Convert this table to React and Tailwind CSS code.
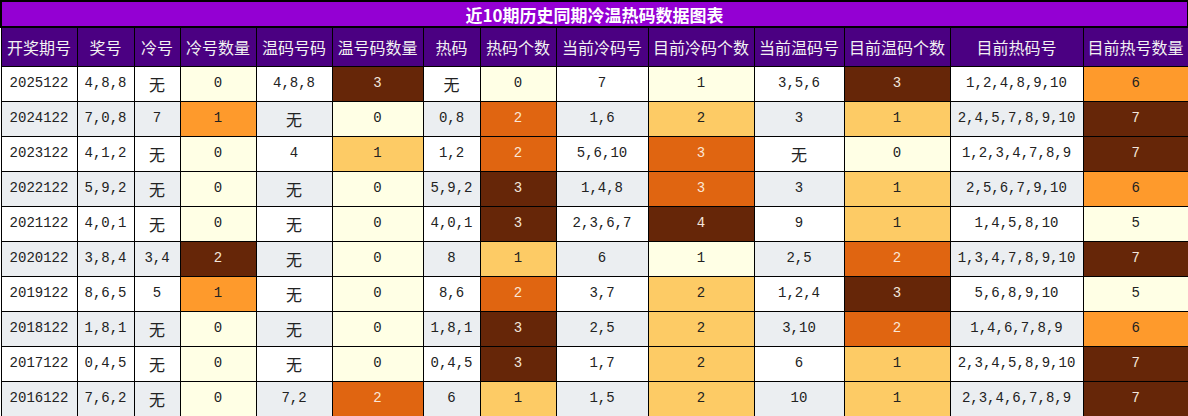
const headers = [
  '开奖期号', '奖号', '冷号', '冷号数量', '温码号码', '温号码数量', '热码', '热码个数',
  '当前冷码号', '目前冷码个数', '当前温码号', '目前温码个数', '目前热码号', '目前热号数量',
];

const widths = [76, 57, 46, 76, 76, 91, 57, 76, 92, 106, 90, 106, 133, 105];

// cell colours: y = light yellow, d = dark brown, o = orange, l = light orange, b = bright orange
const tones = {
  y: 'bg-[#ffffe5] text-[#222]',
  d: 'bg-[#662608] text-[#f3e6dc]',
  o: 'bg-[#e06511] text-[#fbe7d6]',
  l: 'bg-[#fdcb65] text-[#222]',
  b: 'bg-[#fe9a2c] text-[#222]',
};

const rows = [
  ['2025122', '4,8,8', '无', ['0', 'y'], '4,8,8', ['3', 'd'], '无', ['0', 'y'], '7', ['1', 'y'], '3,5,6', ['3', 'd'], '1,2,4,8,9,10', ['6', 'b']],
  ['2024122', '7,0,8', '7', ['1', 'b'], '无', ['0', 'y'], '0,8', ['2', 'o'], '1,6', ['2', 'l'], '3', ['1', 'l'], '2,4,5,7,8,9,10', ['7', 'd']],
  ['2023122', '4,1,2', '无', ['0', 'y'], '4', ['1', 'l'], '1,2', ['2', 'o'], '5,6,10', ['3', 'o'], '无', ['0', 'y'], '1,2,3,4,7,8,9', ['7', 'd']],
  ['2022122', '5,9,2', '无', ['0', 'y'], '无', ['0', 'y'], '5,9,2', ['3', 'd'], '1,4,8', ['3', 'o'], '3', ['1', 'l'], '2,5,6,7,9,10', ['6', 'b']],
  ['2021122', '4,0,1', '无', ['0', 'y'], '无', ['0', 'y'], '4,0,1', ['3', 'd'], '2,3,6,7', ['4', 'd'], '9', ['1', 'l'], '1,4,5,8,10', ['5', 'y']],
  ['2020122', '3,8,4', '3,4', ['2', 'd'], '无', ['0', 'y'], '8', ['1', 'l'], '6', ['1', 'y'], '2,5', ['2', 'o'], '1,3,4,7,8,9,10', ['7', 'd']],
  ['2019122', '8,6,5', '5', ['1', 'b'], '无', ['0', 'y'], '8,6', ['2', 'o'], '3,7', ['2', 'l'], '1,2,4', ['3', 'd'], '5,6,8,9,10', ['5', 'y']],
  ['2018122', '1,8,1', '无', ['0', 'y'], '无', ['0', 'y'], '1,8,1', ['3', 'd'], '2,5', ['2', 'l'], '3,10', ['2', 'o'], '1,4,6,7,8,9', ['6', 'b']],
  ['2017122', '0,4,5', '无', ['0', 'y'], '无', ['0', 'y'], '0,4,5', ['3', 'd'], '1,7', ['2', 'l'], '6', ['1', 'l'], '2,3,4,5,8,9,10', ['7', 'd']],
  ['2016122', '7,6,2', '无', ['0', 'y'], '7,2', ['2', 'o'], '6', ['1', 'l'], '1,5', ['2', 'l'], '10', ['1', 'l'], '2,3,4,6,7,8,9', ['7', 'd']],
];

function Cell({ value, stripe }) {
  const isTone = Array.isArray(value);
  const text = isTone ? value[0] : value;
  const cjk = text === '无';
  const bg = isTone ? tones[value[1]] : stripe ? 'bg-[#ebeef1] text-[#222]' : 'bg-white text-[#222]';
  return (
    <td
      className={`border border-black h-[35px] p-0 text-center ${bg} ${
        cjk
          ? "text-[16px] font-['Noto_Sans_CJK_SC',sans-serif]"
          : "text-[14px] font-['Liberation_Mono',monospace]"
      }`}
    >
      {text}
    </td>
  );
}

export default function App() {
  return (
    <main className="w-[1188px] h-[416px] bg-white">
      <table className="table-fixed border-collapse w-[1187px]">
        <colgroup>
          {widths.map((w, i) => (
            <col key={i} style={{ width: w }} />
          ))}
        </colgroup>
        <thead>
          <tr>
            <th
              colSpan={14}
              className="h-[26px] p-0 border-2 border-black bg-[#9400d3] text-white text-[17px] font-bold leading-none font-['Noto_Sans_CJK_SC',sans-serif]"
            >
              近10期历史同期冷温热码数据图表
            </th>
          </tr>
          <tr>
            {headers.map((h) => (
              <th
                key={h}
                className="h-[39px] p-0 border border-black bg-[#4b0082] text-[#f2f2f2] text-[16px] font-normal whitespace-nowrap font-['Noto_Sans_CJK_SC',sans-serif]"
              >
                {h}
              </th>
            ))}
          </tr>
        </thead>
        <tbody>
          {rows.map((r, i) => (
            <tr key={r[0]}>
              {r.map((v, j) => (
                <Cell key={j} value={v} stripe={i % 2 === 1} />
              ))}
            </tr>
          ))}
        </tbody>
      </table>
    </main>
  );
}
